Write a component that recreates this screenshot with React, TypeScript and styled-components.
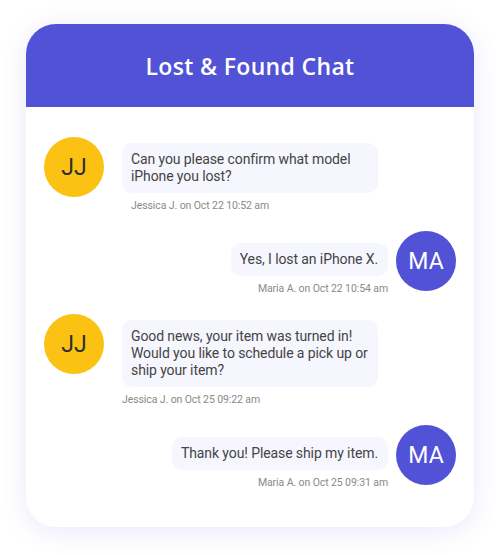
import React from "react";
import styled, { createGlobalStyle } from "styled-components";

const GlobalStyle = createGlobalStyle`
  html, body {
    margin: 0;
    padding: 0;
    background: #ffffff;
  }
  body {
    font-family: Roboto, "Liberation Sans", sans-serif;
  }
  * { box-sizing: border-box; }
`;

const Page = styled.div`
  width: 500px;
  padding: 24px 26px 28px;
`;

const Card = styled.div`
  width: 448px;
  height: 503px;
  background: #ffffff;
  border-radius: 30px;
  overflow: hidden;
  box-shadow: 0 4px 26px rgba(81, 82, 214, 0.13);
  display: flex;
  flex-direction: column;
`;

const Header = styled.div`
  height: 83px;
  background: #5152d6;
  display: flex;
  align-items: center;
  justify-content: center;
`;

const Title = styled.h1`
  margin: 0;
  color: #ffffff;
  font-family: "Open Sans", "Liberation Sans", sans-serif;
  font-weight: 600;
  font-size: 23px;
  letter-spacing: 0.35px;
`;

const Messages = styled.div`
  display: flex;
  flex-direction: column;
  gap: 19px;
  padding: 30px 18px 0;
`;

const Row = styled.div<{ $mine?: boolean }>`
  display: flex;
  align-items: flex-start;
  justify-content: ${(p) => (p.$mine ? "flex-end" : "flex-start")};
  gap: ${(p) => (p.$mine ? "8px" : "18px")};
`;

const Avatar = styled.div<{ $tone: "yellow" | "purple" }>`
  flex: 0 0 60px;
  width: 60px;
  height: 60px;
  border-radius: 50%;
  display: flex;
  align-items: center;
  justify-content: center;
  background: ${(p) => (p.$tone === "yellow" ? "#fcc213" : "#5152d6")};
  color: ${(p) => (p.$tone === "yellow" ? "#2f2f2f" : "#ffffff")};
  font-family: Roboto, "Liberation Sans", sans-serif;
  font-size: 23px;
  font-weight: 400;
`;

const Column = styled.div<{ $mine?: boolean }>`
  display: flex;
  flex-direction: column;
  align-items: ${(p) => (p.$mine ? "flex-end" : "flex-start")};
  margin-top: ${(p) => (p.$mine ? "12px" : "6px")};
`;

const Bubble = styled.div`
  max-width: 256px;
  background: #f6f6fe;
  border-radius: 10px;
  padding: 8px 10px 8px 9px;
  color: #444444;
  font-size: 14px;
  letter-spacing: -0.1px;
  line-height: 17px;
`;

const Meta = styled.div<{ $indent?: number }>`
  margin-top: 6px;
  padding-left: ${(p) => p.$indent ?? 0}px;
  color: #8a8a8a;
  font-size: 10.5px;
  letter-spacing: -0.1px;
  line-height: 13px;
`;

type Msg = {
  mine: boolean;
  initials: string;
  text: string;
  meta: string;
  indent?: number;
};

const messages: Msg[] = [
  {
    mine: false,
    initials: "JJ",
    text: "Can you please confirm what model iPhone you lost?",
    meta: "Jessica J. on Oct 22 10:52 am",
    indent: 9,
  },
  {
    mine: true,
    initials: "MA",
    text: "Yes, I lost an iPhone X.",
    meta: "Maria A. on Oct 22 10:54 am",
  },
  {
    mine: false,
    initials: "JJ",
    text: "Good news, your item was turned in! Would you like to schedule a pick up or ship your item?",
    meta: "Jessica J. on Oct 25 09:22 am",
  },
  {
    mine: true,
    initials: "MA",
    text: "Thank you! Please ship my item.",
    meta: "Maria A. on Oct 25 09:31 am",
  },
];

export default function App() {
  return (
    <>
      <GlobalStyle />
      <Page>
        <Card>
          <Header>
            <Title>Lost &amp; Found Chat</Title>
          </Header>
          <Messages>
            {messages.map((m, i) =>
              m.mine ? (
                <Row key={i} $mine>
                  <Column $mine>
                    <Bubble>{m.text}</Bubble>
                    <Meta>{m.meta}</Meta>
                  </Column>
                  <Avatar $tone="purple">{m.initials}</Avatar>
                </Row>
              ) : (
                <Row key={i}>
                  <Avatar $tone="yellow">{m.initials}</Avatar>
                  <Column>
                    <Bubble>{m.text}</Bubble>
                    <Meta $indent={m.indent}>{m.meta}</Meta>
                  </Column>
                </Row>
              )
            )}
          </Messages>
        </Card>
      </Page>
    </>
  );
}
